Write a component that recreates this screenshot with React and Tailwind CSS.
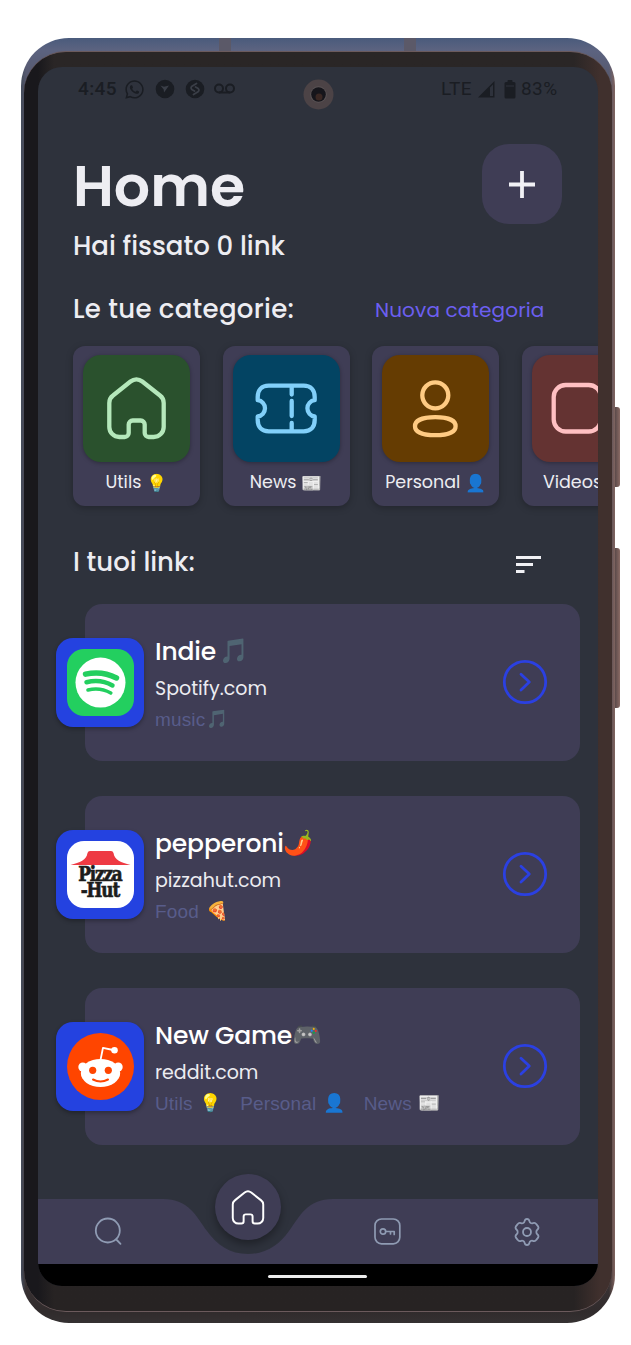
import React from "react";
import { FaWhatsapp } from "react-icons/fa";

const HOME =
  "M26.300 48c0-3.200 1.200-5.600 3.700-7.500L47.500 26.500c3.600-2.800 8.200-2.800 11.800 0L77 40.500c2.500 1.900 3.700 4.300 3.700 7.500V72a10 10 0 0 1-10 10h-5a4 4 0 0 1-4-4V69.500a4 4 0 0 0-4-4H49.700a4 4 0 0 0-4 4V78a4 4 0 0 1-4 4h-5.400a10 10 0 0 1-10-10Z";

const poppins = "font-['Poppins','Inter',sans-serif] [font-feature-settings:'cv11'] whitespace-nowrap leading-none";

function Emoji({ children, className = "" }) {
  return (
    <span className={`inline-block font-['Noto_Color_Emoji',sans-serif] leading-none tracking-normal ${className}`}>
      {children}
    </span>
  );
}

function StatusBar() {
  return (
    <div className="flex h-[44px] shrink-0 items-center pl-[40px] pr-[40px] text-[#1a1d23]">
      <span className="w-[46px] font-[Roboto,sans-serif] text-[19px] font-medium tracking-[0.4px]">4:45</span>
      <FaWhatsapp size={21} />
      <svg className="ml-[10px]" width="20" height="20" viewBox="0 0 20 20">
        <circle cx="10" cy="10" r="9.300" fill="currentColor" />
        <path d="M5.500 6.500l3.500 1.200L14 6.500l-2.500 3.500L9 13.500 8.700 10.500Z" fill="#3a3e47" />
      </svg>
      <svg className="ml-[10px]" width="20" height="20" viewBox="0 0 20 20" fill="none">
        <circle cx="10" cy="10" r="9.300" fill="currentColor" />
        <path d="M11.500 4.500L7 7.200Q5 9 7.200 10.700L9.500 12M8.500 15.500L13 12.800Q15 11 12.800 9.300L10.500 8" stroke="#3a3e47" strokeWidth="1.800" strokeLinecap="round" />
      </svg>
      <svg className="ml-[9px]" width="21" height="12" viewBox="0 0 21 12" fill="none" stroke="currentColor" strokeWidth="2">
        <circle cx="5" cy="5.500" r="4" />
        <circle cx="16" cy="5.500" r="4" />
        <path d="M5 9.500H16" />
      </svg>
      <span className="ml-auto font-[Roboto,sans-serif] text-[19px] tracking-[0.4px]">LTE</span>
      <svg className="ml-[6px]" width="17" height="17" viewBox="0 0 17 17">
        <path d="M0 16.500L16.500 0V16.500Z" fill="currentColor" />
        <path d="M12 6.500L15 3.500V15H12Z" fill="#2e323c" />
      </svg>
      <svg className="ml-[9px]" width="12" height="19" viewBox="0 0 12 19" fill="currentColor">
        <rect x="3.500" y="0" width="5" height="4" rx="1" />
        <rect x="0.500" y="2" width="11" height="16.500" rx="1.500" />
        <path d="M2 6h8" stroke="#3a3e47" strokeWidth="0.700" />
      </svg>
      <span className="ml-[5px] font-[Roboto,sans-serif] text-[19px] tracking-[0.4px]">83%</span>
    </div>
  );
}

function Glyph({ kind }) {
  return (
    <svg width="107" height="107" viewBox="0 0 107 107" fill="none" stroke="currentColor" strokeWidth="4.300" strokeLinecap="round" strokeLinejoin="round">
      {kind === "home" && <path d={HOME} />}
      {kind === "ticket" && (
        <path d="M24.700 42c0-7 4-11.300 11-11.300h35c7 0 11 4.300 11 11.300v3.200a8.200 8.200 0 0 0 0 16.300V65c0 7-4 11.300-11 11.300h-35c-7 0-11-4.300-11-11.300v-3.500a8.200 8.200 0 0 0 0-16.300ZM58.700 31V39.500M58.700 46V61M58.700 68V76" />
      )}
      {kind === "person" && (
        <>
          <circle cx="53.300" cy="40.300" r="13" />
          <path d="M53.300 62.200c12 0 20.300 3 20.300 9s-8.300 9-20.300 9-20.300-3-20.300-9 8.300-9 20.300-9Z" />
        </>
      )}
      {kind === "video" && <rect x="21.700" y="30" width="47" height="46.500" rx="12" />}
    </svg>
  );
}

function Category({ kind, color, label, emoji }) {
  return (
    <div className="flex h-[160px] w-[127px] shrink-0 flex-col items-center rounded-[12px] bg-[#3f3d55] pt-[9px] shadow-[0_2px_7px_rgba(0,0,0,0.25)]">
      <div className={`h-[107px] w-[107px] rounded-[18px] shadow-[0_1px_4px_rgba(0,0,0,0.3)] ${color}`}>
        <Glyph kind={kind} />
      </div>
      <div className={`mt-[10px] flex h-[22px] items-center text-[17.500px] text-[#ececf1] ${poppins}`}>
        {label}
        <Emoji className="ml-[5px] text-[17px]">{emoji}</Emoji>
      </div>
    </div>
  );
}

function Spotify() {
  return (
    <svg className="rounded-[17px] bg-[#23cf5f]" width="67" height="67" viewBox="0 0 67 67" fill="none" stroke="#23cf5f" strokeLinecap="round">
      <circle cx="33.500" cy="33.600" r="25" fill="#fff" stroke="none" />
      <path d="M18.500 25.200Q35 21.500 49.500 29" strokeWidth="5.400" />
      <path d="M19.500 33.300Q33.500 29.800 45.500 36.500" strokeWidth="4.500" />
      <path d="M21 41Q33 38 43.800 44" strokeWidth="3.600" />
    </svg>
  );
}

function PizzaHut() {
  return (
    <div className="flex h-[67px] w-[67px] flex-col items-center rounded-[17px] bg-white pt-[9px]">
      <svg width="61" height="16" viewBox="0 0 61 16">
        <path d="M20 1H41Q43 1 43.500 3C44.500 10 51 12.500 60.500 15H0.500C10 12.500 16.500 10 17.500 3Q18 1 20 1Z" fill="#ee3a43" />
      </svg>
      <div className="flex origin-top scale-x-[0.84] flex-col items-center font-['DejaVu_Serif',serif] text-[20px] font-bold leading-[16px] tracking-[-1.300px] text-[#1c1c1c] [-webkit-text-stroke:0.700px_#1c1c1c]">
        <span>Pizza</span>
        <span>-Hut</span>
      </div>
    </div>
  );
}

function Reddit() {
  return (
    <svg width="67" height="67" viewBox="0 0 67 67">
      <circle cx="33.500" cy="33.500" r="33.500" fill="#ff4500" />
      <path d="M33.500 27L36 14.800L46 17" fill="none" stroke="#fff" strokeWidth="1.800" strokeLinejoin="round" />
      <circle cx="47.500" cy="17.200" r="3.300" fill="#fff" />
      <circle cx="15.800" cy="34" r="4.500" fill="#fff" />
      <circle cx="51.200" cy="34" r="4.500" fill="#fff" />
      <ellipse cx="33.500" cy="40" rx="19.700" ry="14" fill="#fff" />
      <circle cx="25.700" cy="37.300" r="3.600" fill="#ff4500" />
      <circle cx="41.300" cy="37.300" r="3.600" fill="#ff4500" />
      <path d="M26 46.500Q33.500 50.500 41 46.500" fill="none" stroke="#ff4500" strokeWidth="2" strokeLinecap="round" />
    </svg>
  );
}

function LinkCard({ logo, title, titleEmoji, emojiClass = "", site, tags }) {
  return (
    <div className="ml-[46.500px] flex h-[157px] w-[495px] shrink-0 items-center rounded-[17px] bg-[#3f3d55]">
      <div className="-ml-[28.500px] mb-px flex h-[89px] w-[88px] shrink-0 items-center justify-center rounded-[17px] bg-[#2442e0] shadow-[0_2px_4px_rgba(0,0,0,0.3)]">
        {logo}
      </div>
      <div className="ml-[11px] flex h-full flex-1 flex-col pt-[30px]">
        <div className={`flex h-[34px] items-center text-[25px] font-medium tracking-[-0.150px] text-white ${poppins}`}>
          {title}
          <Emoji className={`text-[24px] ${emojiClass}`}>{titleEmoji}</Emoji>
        </div>
        <div className={`mt-[5px] flex h-[30px] items-center text-[19px] text-[#ececf1] ${poppins}`}>{site}</div>
        <div className="mt-[4px] flex h-[24px] items-center whitespace-nowrap font-['Liberation_Sans',Arial,sans-serif] text-[19px] leading-none tracking-[0.150px] text-[#585c8a]">
          {tags.map(([name, emoji, cls]) => (
            <span key={name} className={`flex items-center ${cls}`}>
              {name}
              <Emoji className={`text-[18px] ${name === "music" ? "ml-[1px] opacity-80" : "ml-[7px]"}`}>{emoji}</Emoji>
            </span>
          ))}
        </div>
      </div>
      <svg className="mb-px mr-[32px] shrink-0" width="46" height="46" viewBox="0 0 46 46" fill="none" stroke="#2b40e2" strokeWidth="2.800" strokeLinecap="round" strokeLinejoin="round">
        <circle cx="23" cy="23" r="20.700" />
        <path d="M19 15.300L27.300 23L19 31" />
      </svg>
    </div>
  );
}

function BottomNav() {
  return (
    <div className="relative h-[65px] shrink-0">
      <svg className="absolute left-0 top-0" width="560" height="65" viewBox="0 0 560 65">
        <path d="M0 0H125C151 0 158 17 169 32C179 46 192 55 210 55S241 46 251 32C262 17 269 0 295 0H560V65H0Z" fill="#3f3d55" />
      </svg>
      <div className="relative flex h-full items-center text-[#8f9bb3]">
        <svg className="ml-[56px]" width="29" height="29" viewBox="0 0 29 29" fill="none" stroke="currentColor" strokeWidth="1.800" strokeLinecap="round">
          <circle cx="13.800" cy="13.500" r="12" />
          <path d="M22.800 23L26.500 26.800" />
        </svg>
        <svg className="ml-[251px]" width="27" height="27" viewBox="0 0 27 27" fill="none" stroke="currentColor" strokeWidth="1.700" strokeLinecap="round" strokeLinejoin="round">
          <rect x="1" y="1" width="24.800" height="24.800" rx="6.500" />
          <circle cx="9" cy="13.500" r="2.700" />
          <path d="M12 13.500H20.200V16.500M16.500 13.500V16" />
        </svg>
        <svg className="ml-[113px]" width="26" height="28" viewBox="0 0 26 28" fill="none" stroke="currentColor" strokeWidth="1.800" strokeLinejoin="round">
          <path d="M10.600 3.200C10.900 1.600 11.600 1 13 1s2.100.6 2.400 2.200c.3 1.600 1.900 2.500 3.400 2 1.600-.6 2.700-.4 3.500.9l1.800 2.300c.7 1.200.4 2.300-.8 3.300-1.300 1.100-1.300 3.500 0 4.600 1.200 1 1.500 2.100.8 3.300l-1.800 2.300c-.8 1.300-1.900 1.500-3.500.9-1.500-.5-3.100.4-3.400 2-.3 1.600-1 2.200-2.400 2.200s-2.100-.6-2.400-2.200c-.3-1.600-1.900-2.500-3.400-2-1.600.6-2.700.4-3.500-.9L1.900 19.600c-.7-1.200-.4-2.300.8-3.300 1.300-1.100 1.300-3.500 0-4.600C1.500 10.700 1.200 9.600 1.900 8.400L3.700 6.100c.8-1.300 1.900-1.500 3.500-.9 1.500.5 3.100-.4 3.400-2Z" />
          <circle cx="13" cy="14" r="4" />
        </svg>
      </div>
      <div className="absolute left-[177px] top-[-25px] flex h-[66px] w-[66px] items-center justify-center rounded-full bg-[#3f3d55] shadow-[0_4px_9px_rgba(0,0,0,0.35)]">
        <svg width="34" height="35" viewBox="24 22 59 62.500" fill="none" stroke="#fff" strokeWidth="3.500" strokeLinejoin="round">
          <path d={HOME} />
        </svg>
      </div>
    </div>
  );
}

export default function App() {
  return (
    <div className="h-[1345px] w-[631px] overflow-hidden bg-white pl-[21px] pt-[38px]">
      <div className="relative h-[1285px] w-[594px] rounded-[48px] bg-[linear-gradient(90deg,#444c5c_0px,transparent_5px,transparent_588px,#80645f_594px),linear-gradient(180deg,#4a5b7c_0px,#5c6380_12px,#51505f_60px,#493e3f_1200px,#302b2c_1274px,#353132_1285px)] px-[3px] pb-[11px] pt-[13px]">
        <div className="absolute left-[594px] top-[369px] h-[80px] w-[5px] rounded-r-[3px] bg-linear-to-r from-[#5b4a4a] to-[#8a6a64]" />
        <div className="absolute left-[594px] top-[510px] h-[160px] w-[5px] rounded-r-[3px] bg-linear-to-r from-[#5b4a4a] to-[#8a6a64]" />
        <div className="absolute left-[198px] top-0 h-[13px] w-[12px] bg-[#5b5968]" />
        <div className="absolute left-[383px] top-0 h-[13px] w-[12px] bg-[#5b5968]" />
        <div className="h-[1261px] w-[588px] rounded-[42px] border-t border-b border-[#6b5a5c] bg-[linear-gradient(90deg,#19181c_0px,#19181c_14px,transparent_30px,transparent_550px,#40302d_576px,#40302d_588px),linear-gradient(180deg,#2a2626,#272323)] pl-[14px] pt-[15px]">
          <div className="relative flex h-[1219px] w-[559.500px] flex-col overflow-hidden rounded-[24px] bg-[#2e323c]">
            <StatusBar />
            <svg className="absolute left-[265px] top-[12px]" width="31" height="31" viewBox="0 0 31 31">
              <circle cx="15.500" cy="15.500" r="15" fill="#4c4346" />
              <circle cx="15.500" cy="15.500" r="8.300" fill="#5a5355" />
              <circle cx="15.500" cy="15.500" r="7.300" fill="#16151b" />
              <circle cx="16" cy="18" r="3.500" fill="#3a2723" />
            </svg>
            <div className="flex h-[160px] shrink-0 justify-between pl-[35px] pr-[35.500px] pt-[33px]">
              <div>
                <h1 className={`mt-[14px] text-[57px] font-semibold text-[#ededf2] ${poppins}`}>Home</h1>
                <p className={`mt-[18px] text-[26px] font-medium text-[#ededf2] ${poppins}`}>Hai fissato 0 link</p>
              </div>
              <div className="flex h-[80px] w-[80px] items-center justify-center rounded-[27px] bg-[#3f3d55]">
                <svg width="26" height="27" viewBox="0 0 26 27" stroke="#f1f1f5" strokeWidth="3.800">
                  <path d="M0 13.500H26M13 0V27" />
                </svg>
              </div>
            </div>
            <div className="flex h-[75px] shrink-0 items-center justify-between pl-[35px] pr-[53px]">
              <h2 className={`text-[26px] font-medium tracking-[0.300px] text-[#ededf2] ${poppins}`}>Le tue categorie:</h2>
              <span className={`mt-[3px] text-[20px] tracking-[0.150px] text-[#6c5ff0] ${poppins}`}>Nuova categoria</span>
            </div>
            <div className="flex h-[160px] shrink-0 gap-[22.700px] pl-[35px]">
              <Category kind="home" color="bg-[#2a512d] text-[#b5e8bb]" label="Utils" emoji="💡" />
              <Category kind="ticket" color="bg-[#034463] text-[#82d0fa]" label="News" emoji="📰" />
              <Category kind="person" color="bg-[#653c02] text-[#ffcb83]" label="Personal" emoji="👤" />
              <Category kind="video" color="bg-[#643332] text-[#ffc0c2]" label="Videos" emoji="🎥" />
            </div>
            <div className="flex h-[98px] shrink-0 items-center justify-between pl-[35px] pr-[57px] pt-[13px]">
              <h2 className={`text-[26px] font-medium text-[#ededf2] ${poppins}`}>I tuoi link:</h2>
              <svg className="mt-[6px]" width="25" height="18" viewBox="0 0 25 18" fill="#f1f1f5">
                <path d="M0 0H25V3H0ZM0 7H17V10H0ZM0 14H8.500V17H0Z" />
              </svg>
            </div>
            <div className="flex h-[595px] shrink-0 flex-col gap-[35px]">
              <LinkCard logo={<Spotify />} title="Indie" titleEmoji="🎵" emojiClass="ml-[3px] opacity-80" site="Spotify.com" tags={[["music", "🎵", ""]]} />
              <LinkCard logo={<PizzaHut />} title="pepperoni" titleEmoji="🌶️" site="pizzahut.com" tags={[["Food", "🍕", ""]]} />
              <LinkCard
                logo={<Reddit />}
                title="New Game"
                titleEmoji="🎮"
                site="reddit.com"
                tags={[["Utils", "💡", ""], ["Personal", "👤", "ml-[18px]"], ["News", "📰", "ml-[18px]"]]}
              />
            </div>
            <BottomNav />
            <div className="flex h-[22px] shrink-0 justify-center bg-black pt-[11px]">
              <div className="h-[3px] w-[99px] rounded-full bg-[#ececec]" />
            </div>
          </div>
        </div>
      </div>
    </div>
  );
}
